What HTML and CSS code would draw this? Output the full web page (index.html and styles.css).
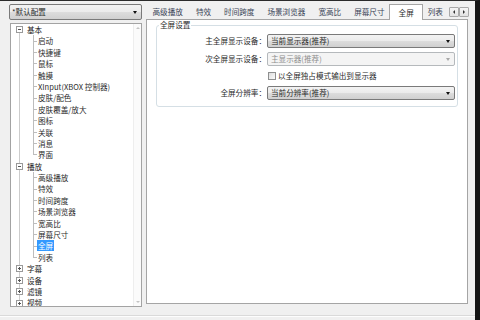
FILE: index.html
```html
<!DOCTYPE html>
<html lang="zh-CN">
<head>
<meta charset="utf-8">
<title>参数选项</title>
<link rel="stylesheet" href="styles.css">
</head>
<body>
<div class="window">
  <div class="content">
    <div class="side">
      <div class="combo profile"><span class="ctext">*默认配置</span><i class="arrow"></i></div>
      <div class="treebox">
        <div class="tree">
          <div class="node"><span class="exp open"></span><span class="label">基本</span></div>
          <div class="kids">
            <div class="leaf"><span class="label">启动</span></div>
            <div class="leaf"><span class="label">快捷键</span></div>
            <div class="leaf"><span class="label">鼠标</span></div>
            <div class="leaf"><span class="label">触摸</span></div>
            <div class="leaf"><span class="label">XInput(XBOX 控制器)</span></div>
            <div class="leaf"><span class="label">皮肤/配色</span></div>
            <div class="leaf"><span class="label">皮肤覆盖/放大</span></div>
            <div class="leaf"><span class="label">图标</span></div>
            <div class="leaf"><span class="label">关联</span></div>
            <div class="leaf"><span class="label">消息</span></div>
            <div class="leaf last"><span class="label">界面</span></div>
          </div>
          <div class="node"><span class="exp open"></span><span class="label">播放</span></div>
          <div class="kids">
            <div class="leaf"><span class="label">高级播放</span></div>
            <div class="leaf"><span class="label">特效</span></div>
            <div class="leaf"><span class="label">时间跨度</span></div>
            <div class="leaf"><span class="label">场景浏览器</span></div>
            <div class="leaf"><span class="label">宽高比</span></div>
            <div class="leaf"><span class="label">屏幕尺寸</span></div>
            <div class="leaf"><span class="label sel">全屏</span></div>
            <div class="leaf last"><span class="label">列表</span></div>
          </div>
          <div class="node"><span class="exp"></span><span class="label">字幕</span></div>
          <div class="node"><span class="exp"></span><span class="label">设备</span></div>
          <div class="node"><span class="exp"></span><span class="label">滤镜</span></div>
          <div class="node"><span class="exp"></span><span class="label">视频</span></div>
        </div>
        <div class="vscroll">
          <i class="sarrow up"></i>
          <i class="sarrow down"></i>
        </div>
      </div>
    </div>

    <div class="pane">
      <div class="tabs">
        <span class="tab">高级播放</span>
        <span class="tab">特效</span>
        <span class="tab">时间跨度</span>
        <span class="tab">场景浏览器</span>
        <span class="tab">宽高比</span>
        <span class="tab">屏幕尺寸</span>
        <span class="tab sel">全屏</span>
        <span class="tab">列表</span>
        <div class="tabscroll">
          <span class="sbtn"><i class="tri left"></i></span>
          <span class="sbtn"><i class="tri right"></i></span>
        </div>
      </div>
      <div class="page">
        <fieldset class="group">
          <legend>全屏设置</legend>
          <div class="form">
            <span class="flabel">主全屏显示设备：</span>
            <div class="combo"><span class="ctext">当前显示器(推荐)</span><i class="arrow"></i></div>
            <span class="flabel">次全屏显示设备：</span>
            <div class="combo disabled"><span class="ctext">主显示器(推荐)</span><i class="arrow"></i></div>
            <span class="flabel"></span>
            <label class="check"><span class="box"></span><span>以全屏独占模式输出到显示器</span></label>
            <span class="flabel">全屏分辨率：</span>
            <div class="combo"><span class="ctext">当前分辨率(推荐)</span><i class="arrow"></i></div>
          </div>
        </fieldset>
      </div>
    </div>
  </div>
  <div class="footer"></div>
</div>
</body>
</html>
```

FILE: styles.css
```css
* { box-sizing: border-box; }
html, body { margin: 0; padding: 0; }
body {
  width: 480px;
  height: 320px;
  overflow: hidden;
  background: #f0f0f0;
  font-family: "Noto Sans CJK SC", "Noto Sans", sans-serif;
  font-size: 7.6px;
  color: #2b2b2b;
}
.window {
  height: 320px;
  display: flex;
  flex-direction: column;
  border-top: 1px solid #2b2b2b;
  border-right: 5px solid #151515;
}
.content {
  display: flex;
  padding-top: 3px;
}

/* ---------- left column ---------- */
.side {
  width: 142px;
  flex-shrink: 0;
  padding-left: 9px;
  display: flex;
  flex-direction: column;
}
.combo {
  height: 14px;
  display: flex;
  align-items: center;
  padding-left: 3px;
  border: 1px solid #7a7a7a;
  border-radius: 2px;
  background: linear-gradient(#f3f3f3, #ebebeb 50%, #dddddd 50%, #d0d0d0);
  color: #2b2b2b;
  line-height: 12px;
  white-space: nowrap;
}
.combo .arrow {
  margin-left: auto;
  margin-right: 4px;
  width: 0;
  height: 0;
  border-left: 2.5px solid transparent;
  border-right: 2.5px solid transparent;
  border-top: 3px solid #111;
}
.combo.disabled {
  border-color: #b5b9bc;
  background: #f4f4f4;
  color: #8d8d8d;
}
.combo.disabled .arrow { border-top-color: #a8a8a8; }
.combo.profile {
  height: 16px;
  margin-bottom: 3px;
  padding-left: 2px;
}

.treebox {
  width: 132px;
  height: 284px;
  margin-left: 1px;
  border: 1px solid #a3a3a3;
  background: #fff;
  display: flex;
  overflow: hidden;
}
.tree {
  flex: 1;
  line-height: 11.4px;
  white-space: nowrap;
  background: linear-gradient(#cccccc, #cccccc) no-repeat 8px 9px / 1px 100%;
}
.node {
  height: 11.4px;
  display: flex;
  align-items: center;
  padding-left: 5px;
}
.exp {
  width: 7px;
  height: 7px;
  border: 1px solid #9a9a9a;
  background: #fff linear-gradient(#555, #555) no-repeat center / 3px 1px;
  margin-right: 4px;
  flex-shrink: 0;
}
.exp:not(.open) {
  background:
    linear-gradient(#555, #555) no-repeat center / 3px 1px,
    linear-gradient(#555, #555) no-repeat center / 1px 3px,
    #fff;
}
.node .label { color: #222; }
.kids {
  background: linear-gradient(#bdbdbd, #bdbdbd) no-repeat 22px 0 / 1px calc(100% - 5.7px);
}
.leaf {
  height: 11.4px;
  padding-left: 27px;
  background: linear-gradient(#bdbdbd, #bdbdbd) no-repeat 22px 50% / 4px 1px;
  color: #2b2b2b;
}
.leaf .label.sel {
  background: #3399ff;
  color: #fff;
  padding: 0 1px;
  margin-left: -1px;
}

.vscroll {
  width: 8px;
  flex-shrink: 0;
  background: #fbfbfb;
  border-left: 1px solid #eeeeee;
  display: flex;
  flex-direction: column;
  justify-content: space-between;
  align-items: center;
  padding: 3px 0;
}
.sarrow {
  width: 0;
  height: 0;
  border-left: 2px solid transparent;
  border-right: 2px solid transparent;
}
.sarrow.up { border-bottom: 2px solid #c4c4c4; }
.sarrow.down { border-top: 2px solid #c4c4c4; }

/* ---------- right pane ---------- */
.pane {
  width: 322px;
  margin-left: 4px;
  flex-shrink: 0;
  display: flex;
  flex-direction: column;
}
.tabs {
  height: 15px;
  display: flex;
  align-items: flex-end;
  white-space: nowrap;
}
.tab {
  flex-shrink: 0;
  padding: 0 6.5px;
  line-height: 14px;
  color: #3a4457;
}
.tab.sel {
  position: relative;
  z-index: 1;
  margin: 0 -2px -1px;
  padding: 0 8.5px;
  line-height: 15px;
  background: #fff;
  border: 1px solid #a5a5a5;
  border-bottom: none;
  color: #2b2b2b;
}
.tabscroll {
  margin-left: auto;
  align-self: flex-start;
  margin-top: 3px;
  display: flex;
}
.sbtn {
  width: 10px;
  height: 10px;
  border: 1px solid #a9a9a9;
  border-radius: 1px;
  background: linear-gradient(#f6f6f6, #e2e2e2);
  display: flex;
  align-items: center;
  justify-content: center;
}
.tri {
  width: 0;
  height: 0;
  border-top: 2px solid transparent;
  border-bottom: 2px solid transparent;
}
.tri.left { border-right: 2px solid #333; }
.tri.right { border-left: 2px solid #333; }

.page {
  height: 285px;
  background: #fff;
  border: 1px solid #a5a5a5;
}
.group {
  margin: 0 9px;
  padding: 4px 0 6px 0;
  min-width: 0;
  border: 1px solid #d5dfe5;
  border-radius: 3px;
}
.group legend {
  margin-left: 2px;
  padding: 0 1px;
  line-height: 10px;
  color: #2b2b2b;
}
.form {
  display: grid;
  grid-template-columns: 109px 188px;
  grid-template-rows: 14px 14px 12px 14px;
  column-gap: 1px;
  row-gap: 4px;
  align-items: center;
}
.flabel {
  text-align: right;
  line-height: 14px;
  color: #2b2b2b;
  white-space: nowrap;
}
.check {
  display: flex;
  align-items: center;
  line-height: 12px;
  white-space: nowrap;
}
.check .box {
  width: 8px;
  height: 8px;
  margin-left: 1px;
  margin-right: 2px;
  border: 1px solid #8e8f8f;
  background: linear-gradient(135deg, #dcdcdc, #fbfbfb);
}

.footer {
  margin-top: auto;
  height: 5px;
  border-top: 1px solid #dadada;
  box-shadow: inset 0 1px #fdfdfd;
}
```
